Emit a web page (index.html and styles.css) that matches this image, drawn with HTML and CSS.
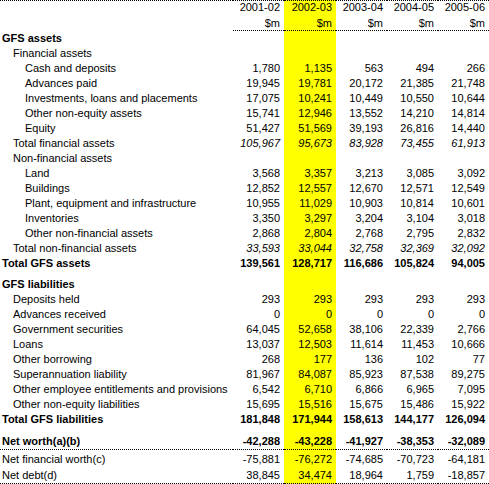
FILE: index.html
```html
<!DOCTYPE html>
<html>
<head>
<meta charset="utf-8">
<link rel="stylesheet" href="styles.css">
</head>
<body>
<table class="gfs">
  <colgroup>
    <col class="c-lbl"><col class="c-n"><col class="c-hl"><col class="c-n"><col class="c-n"><col class="c-n">
  </colgroup>
  <tr class="hd1"><td class="lbl"></td><td>2001-02</td><td>2002-03</td><td>2003-04</td><td>2004-05</td><td>2005-06</td></tr>
  <tr class="hd2"><td class="lbl"></td><td>$m</td><td>$m</td><td>$m</td><td>$m</td><td>$m</td></tr>
  <tr class="b"><td class="lbl l0">GFS assets</td><td></td><td></td><td></td><td></td><td></td></tr>
  <tr><td class="lbl l1">Financial assets</td><td></td><td></td><td></td><td></td><td></td></tr>
  <tr><td class="lbl l2">Cash and deposits</td><td>1,780</td><td>1,135</td><td>563</td><td>494</td><td>266</td></tr>
  <tr><td class="lbl l2">Advances paid</td><td>19,945</td><td>19,781</td><td>20,172</td><td>21,385</td><td>21,748</td></tr>
  <tr><td class="lbl l2">Investments, loans and placements</td><td>17,075</td><td>10,241</td><td>10,449</td><td>10,550</td><td>10,644</td></tr>
  <tr><td class="lbl l2">Other non-equity assets</td><td>15,741</td><td>12,946</td><td>13,552</td><td>14,210</td><td>14,814</td></tr>
  <tr><td class="lbl l2">Equity</td><td>51,427</td><td>51,569</td><td>39,193</td><td>26,816</td><td>14,440</td></tr>
  <tr class="it"><td class="lbl l1">Total financial assets</td><td>105,967</td><td>95,673</td><td>83,928</td><td>73,455</td><td>61,913</td></tr>
  <tr><td class="lbl l1">Non-financial assets</td><td></td><td></td><td></td><td></td><td></td></tr>
  <tr><td class="lbl l2">Land</td><td>3,568</td><td>3,357</td><td>3,213</td><td>3,085</td><td>3,092</td></tr>
  <tr><td class="lbl l2">Buildings</td><td>12,852</td><td>12,557</td><td>12,670</td><td>12,571</td><td>12,549</td></tr>
  <tr><td class="lbl l2">Plant, equipment and infrastructure</td><td>10,955</td><td>11,029</td><td>10,903</td><td>10,814</td><td>10,601</td></tr>
  <tr><td class="lbl l2">Inventories</td><td>3,350</td><td>3,297</td><td>3,204</td><td>3,104</td><td>3,018</td></tr>
  <tr><td class="lbl l2">Other non-financial assets</td><td>2,868</td><td>2,804</td><td>2,768</td><td>2,795</td><td>2,832</td></tr>
  <tr class="it"><td class="lbl l1">Total non-financial assets</td><td>33,593</td><td>33,044</td><td>32,758</td><td>32,369</td><td>32,092</td></tr>
  <tr class="b"><td class="lbl l0">Total GFS assets</td><td>139,561</td><td>128,717</td><td>116,686</td><td>105,824</td><td>94,005</td></tr>
  <tr class="sp6"><td class="lbl"></td><td></td><td></td><td></td><td></td><td></td></tr>
  <tr class="b"><td class="lbl l0">GFS liabilities</td><td></td><td></td><td></td><td></td><td></td></tr>
  <tr><td class="lbl l1">Deposits held</td><td>293</td><td>293</td><td>293</td><td>293</td><td>293</td></tr>
  <tr><td class="lbl l1">Advances received</td><td>0</td><td>0</td><td>0</td><td>0</td><td>0</td></tr>
  <tr><td class="lbl l1">Government securities</td><td>64,045</td><td>52,658</td><td>38,106</td><td>22,339</td><td>2,766</td></tr>
  <tr><td class="lbl l1">Loans</td><td>13,037</td><td>12,503</td><td>11,614</td><td>11,453</td><td>10,666</td></tr>
  <tr><td class="lbl l1">Other borrowing</td><td>268</td><td>177</td><td>136</td><td>102</td><td>77</td></tr>
  <tr><td class="lbl l1">Superannuation liability</td><td>81,967</td><td>84,087</td><td>85,923</td><td>87,538</td><td>89,275</td></tr>
  <tr><td class="lbl l1">Other employee entitlements and provisions</td><td>6,542</td><td>6,710</td><td>6,866</td><td>6,965</td><td>7,095</td></tr>
  <tr><td class="lbl l1">Other non-equity liabilities</td><td>15,695</td><td>15,516</td><td>15,675</td><td>15,486</td><td>15,922</td></tr>
  <tr class="b"><td class="lbl l0">Total GFS liabilities</td><td>181,848</td><td>171,944</td><td>158,613</td><td>144,177</td><td>126,094</td></tr>
  <tr class="sp7"><td class="lbl"></td><td></td><td></td><td></td><td></td><td></td></tr>
  <tr class="b rule nw"><td class="lbl l0">Net worth(a)(b)</td><td>-42,288</td><td>-43,228</td><td>-41,927</td><td>-38,353</td><td>-32,089</td></tr>
  <tr class="nfw"><td class="lbl l0">Net financial worth(c)</td><td>-75,881</td><td>-76,272</td><td>-74,685</td><td>-70,723</td><td>-64,181</td></tr>
  <tr class="rule nd"><td class="lbl l0">Net debt(d)</td><td>38,845</td><td>34,474</td><td>18,964</td><td>1,759</td><td>-18,857</td></tr>
</table>
</body>
</html>
```

FILE: styles.css
```css
html, body {
  margin: 0;
  padding: 0;
  background: #fff;
}

body {
  font-family: "Liberation Sans", Arial, sans-serif;
  font-size: 11px;
  color: #000;
}

.gfs {
  border-collapse: separate;
  border-spacing: 0;
  table-layout: fixed;
  width: 489px;
}

.c-lbl { width: 233px; }
.c-n { width: 51px; }
.c-hl { width: 52px; }

.gfs td {
  padding: 0 4px 0 0;
  line-height: 15px;
  white-space: nowrap;
  text-align: right;
  vertical-align: top;
  overflow: visible;
}

.gfs td:nth-child(3) {
  background: #ffff00;
}

.gfs td.lbl {
  text-align: left;
  padding-right: 0;
}

.l0 { padding-left: 2px !important; }
.l1 { padding-left: 13px !important; }
.l2 { padding-left: 25px !important; }

.b td { font-weight: bold; }
.it td { font-style: italic; }
.it td.lbl { font-style: normal; }

.hd1 td {
  border-top: 1px dotted #000;
  line-height: 13px;
  padding-bottom: 2px;
}

.hd2 td {
  line-height: 14px;
}

.hd2 td:not(.lbl) {
  border-bottom: 1px dotted #000;
}

.sp6 td {
  height: 6px;
  line-height: 6px;
  font-size: 1px;
}

.sp7 td {
  height: 7px;
  line-height: 7px;
  font-size: 1px;
}

.rule td {
  border-bottom: 1px dotted #000;
}

.nfw td {
  padding-top: 2px;
}

.nd td {
  padding-top: 1px;
}
```
